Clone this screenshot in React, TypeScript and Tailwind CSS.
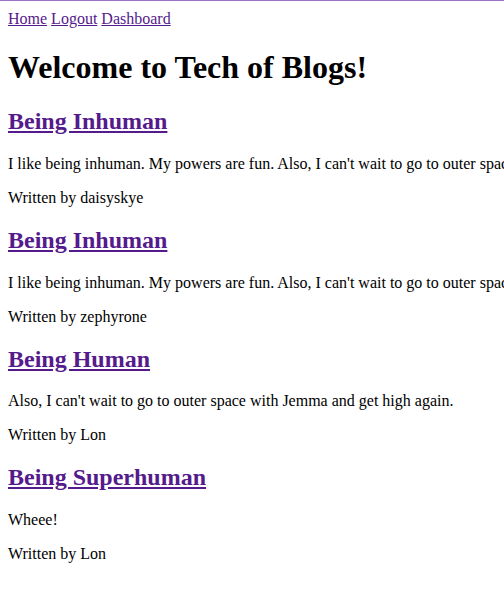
const posts = [
  {
    title: "Being Inhuman",
    body: "I like being inhuman. My powers are fun. Also, I can't wait to go to outer space with Jemma and get high again.",
    author: "daisyskye",
  },
  {
    title: "Being Inhuman",
    body: "I like being inhuman. My powers are fun. Also, I can't wait to go to outer space with Jemma and get high again.",
    author: "zephyrone",
  },
  {
    title: "Being Human",
    body: "Also, I can't wait to go to outer space with Jemma and get high again.",
    author: "Lon",
  },
  {
    title: "Being Superhuman",
    body: "Wheee!",
    author: "Lon",
  },
];

export default function App() {
  return (
    <div className="min-h-[590px] overflow-hidden border-t border-[#9b72c4] bg-white font-['Liberation_Serif','Times_New_Roman',serif] text-base leading-[normal] text-black">
      <div className="m-2 mt-[9px]">
        <nav>
          <a href="#" className="text-[#551a8b] underline">Home</a>{" "}
          <a href="#" className="text-[#551a8b] underline">Logout</a>{" "}
          <a href="#" className="text-[#551a8b] underline">Dashboard</a>
        </nav>
        <h1 className="my-[21.44px] text-[32px] leading-[normal] font-bold">Welcome to Tech of Blogs!</h1>
        {posts.map((p, i) => (
          <div key={i}>
            <h2 className="my-[19.92px] text-2xl leading-[normal] font-bold">
              <a href="#" className="text-[#551a8b] underline">{p.title}</a>
            </h2>
            <p className="my-4 whitespace-nowrap">{p.body}</p>
            <p className="my-4">Written by {p.author}</p>
          </div>
        ))}
      </div>
    </div>
  );
}
